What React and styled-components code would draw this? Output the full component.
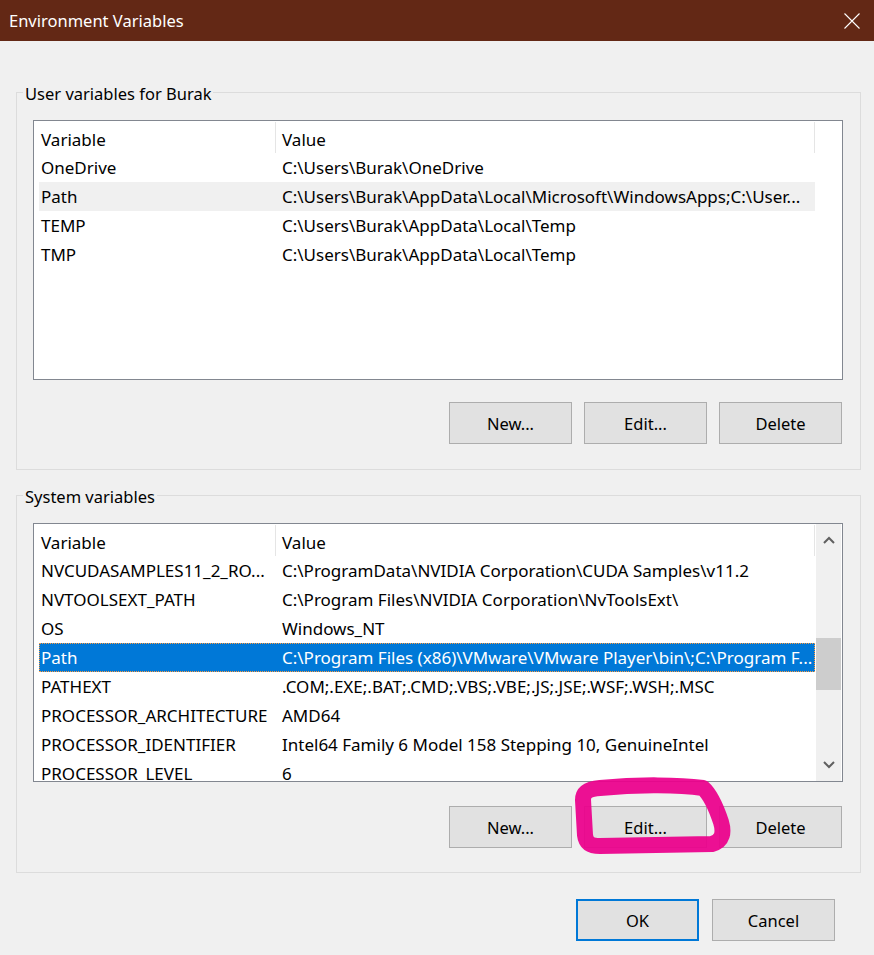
import React from "react";
import styled, { createGlobalStyle } from "styled-components";

const FONT = `"Noto Sans", "Segoe UI", "Liberation Sans", sans-serif`;

const Global = createGlobalStyle`
  html, body { margin: 0; padding: 0; background: #f0f0f0; }
  body { font-family: ${FONT}; }
  * { box-sizing: border-box; }
`;

const Window = styled.div`
  position: relative;
  width: 874px;
  height: 955px;
  background: #f0f0f0;
  display: flex;
  flex-direction: column;
  overflow: hidden;
  font-family: ${FONT};
  font-size: 16.5px;
  color: #000;
`;

const TitleBar = styled.div`
  height: 41px;
  flex: none;
  background: #632815;
  display: flex;
  align-items: center;
  justify-content: space-between;
  padding: 0 14px 0 9px;
  color: #fff;
  font-size: 16.5px;
`;

const TitleText = styled.span`
  line-height: 41px;
  padding-bottom: 1px;
`;

const Body = styled.div`
  flex: 1;
  display: flex;
  flex-direction: column;
  padding: 51px 13px 0 16px;
`;

const GroupBox = styled.div`
  position: relative;
  border: 1px solid #dcdcdc;
  margin-top: ${(p) => p.$mt || 0}px;
  padding: 27px 17px ${(p) => p.$pb}px 16px;
  display: flex;
  flex-direction: column;
`;

const Legend = styled.span`
  position: absolute;
  top: -10px;
  left: 6px;
  padding: 0 2px;
  background: #f0f0f0;
  line-height: 22px;
  white-space: nowrap;
`;

const ListBox = styled.div`
  width: 810px;
  height: ${(p) => p.$h}px;
  border: 1px solid #828790;
  background: #fff;
  display: flex;
  overflow: hidden;
  font-size: 17px;
`;

const ListContent = styled.div`
  width: 782px;
  flex: none;
  display: flex;
  flex-direction: column;
  overflow: hidden;
`;

const Header = styled.div`
  height: 32px;
  flex: none;
  display: flex;
`;

const HeaderCell = styled.div`
  width: ${(p) => p.$w}px;
  flex: none;
  margin-top: 1px;
  height: 31px;
  line-height: 31px;
  padding-top: 2px;
  padding-left: ${(p) => p.$pl}px;
  border-right: 1px solid #e5e5e5;
  white-space: nowrap;
`;

const Row = styled.div`
  height: 29px;
  flex: none;
  margin-left: 5px;
  width: 776px;
  display: flex;
  line-height: 30px;
  white-space: nowrap;
  background: ${(p) => (p.$sel ? "#0078d7" : p.$hot ? "#f0f0f0" : "transparent")};
  color: ${(p) => (p.$sel ? "#fff" : "#000")};
  outline: ${(p) => (p.$sel ? "1px dotted #ff9b3d" : "none")};
  outline-offset: -1px;
`;

const Cell = styled.div`
  width: ${(p) => p.$w}px;
  flex: ${(p) => (p.$w ? "none" : "1")};
  padding-left: ${(p) => p.$pl}px;
  overflow: hidden;
  white-space: nowrap;
`;

const ScrollBar = styled.div`
  width: 25px;
  flex: none;
  margin-right: 1px;
  background: #f0f0f0;
  display: flex;
  flex-direction: column;
`;

const ScrollArrow = styled.div`
  height: 32px;
  flex: none;
  display: flex;
  align-items: center;
  justify-content: center;
`;

const ScrollTrack = styled.div`
  flex: 1;
  display: flex;
  flex-direction: column;
`;

const Thumb = styled.div`
  margin-top: 82px;
  height: 52px;
  background: #cdcdcd;
`;

const ButtonRow = styled.div`
  width: 810px;
  display: flex;
  justify-content: flex-end;
  gap: 12px;
  padding-right: 1px;
  margin-top: ${(p) => p.$mt}px;
`;

const Button = styled.div`
  width: 123px;
  height: 42px;
  background: #e1e1e1;
  border: ${(p) => (p.$default ? "2px solid #0078d7" : "1px solid #adadad")};
  display: flex;
  align-items: center;
  justify-content: center;
  padding-top: 1px;
  white-space: nowrap;
`;

const Footer = styled.div`
  display: flex;
  justify-content: flex-end;
  gap: 13px;
  margin-top: 26px;
  padding-right: 26px;
`;

const Overlay = styled.svg`
  position: absolute;
  left: 0;
  top: 0;
  width: 874px;
  height: 955px;
  pointer-events: none;
  opacity: 0.93;
`;

const Chevron = ({ up }) => (
  <svg width="12" height="8" viewBox="0 0 12 8">
    <path
      d={up ? "M1 7 L6 2 L11 7" : "M1 1 L6 6 L11 1"}
      fill="none"
      stroke="#606060"
      strokeWidth="2"
    />
  </svg>
);

const CloseIcon = () => (
  <svg width="16" height="16" viewBox="0 0 16 16">
    <path d="M0.5 0.5 L15.5 15.5 M15.5 0.5 L0.5 15.5" stroke="#fff" strokeWidth="1.1" />
  </svg>
);

const userVars = [
  ["OneDrive", "C:\\Users\\Burak\\OneDrive"],
  ["Path", "C:\\Users\\Burak\\AppData\\Local\\Microsoft\\WindowsApps;C:\\User..."],
  ["TEMP", "C:\\Users\\Burak\\AppData\\Local\\Temp"],
  ["TMP", "C:\\Users\\Burak\\AppData\\Local\\Temp"],
];

const sysVars = [
  ["NVCUDASAMPLES11_2_RO...", "C:\\ProgramData\\NVIDIA Corporation\\CUDA Samples\\v11.2"],
  ["NVTOOLSEXT_PATH", "C:\\Program Files\\NVIDIA Corporation\\NvToolsExt\\"],
  ["OS", "Windows_NT"],
  ["Path", "C:\\Program Files (x86)\\VMware\\VMware Player\\bin\\;C:\\Program F..."],
  ["PATHEXT", ".COM;.EXE;.BAT;.CMD;.VBS;.VBE;.JS;.JSE;.WSF;.WSH;.MSC"],
  ["PROCESSOR_ARCHITECTURE", "AMD64"],
  ["PROCESSOR_IDENTIFIER", "Intel64 Family 6 Model 158 Stepping 10, GenuineIntel"],
  ["PROCESSOR_LEVEL", "6"],
];

const VarList = ({ rows, height, hot, sel, scroll }) => (
  <ListBox $h={height}>
    <ListContent>
      <Header>
        <HeaderCell $w={242} $pl={7}>Variable</HeaderCell>
        <HeaderCell $w={539} $pl={6}>Value</HeaderCell>
      </Header>
      {rows.map(([k, v], i) => (
        <Row key={k + i} $hot={i === hot} $sel={i === sel}>
          <Cell $w={236} $pl={2}>{k}</Cell>
          <Cell $pl={7}>{v}</Cell>
        </Row>
      ))}
    </ListContent>
    {scroll && (
      <ScrollBar>
        <ScrollArrow><Chevron up /></ScrollArrow>
        <ScrollTrack><Thumb /></ScrollTrack>
        <ScrollArrow><Chevron /></ScrollArrow>
      </ScrollBar>
    )}
  </ListBox>
);

export default function App() {
  return (
    <>
      <Global />
      <Window>
        <TitleBar>
          <TitleText>Environment Variables</TitleText>
          <CloseIcon />
        </TitleBar>
        <Body>
          <GroupBox $pb={25}>
            <Legend>User variables for Burak</Legend>
            <VarList rows={userVars} height={260} hot={1} sel={-1} />
            <ButtonRow $mt={22}>
              <Button>New...</Button>
              <Button>Edit...</Button>
              <Button>Delete</Button>
            </ButtonRow>
          </GroupBox>
          <GroupBox $mt={25} $pb={24}>
            <Legend>System variables</Legend>
            <VarList rows={sysVars} height={259} hot={-1} sel={3} scroll />
            <ButtonRow $mt={24}>
              <Button>New...</Button>
              <Button>Edit...</Button>
              <Button>Delete</Button>
            </ButtonRow>
          </GroupBox>
          <Footer>
            <Button $default>OK</Button>
            <Button>Cancel</Button>
          </Footer>
        </Body>
        <Overlay viewBox="0 0 874 955">
          <path
            d="M 585 835 L 583 800 C 583 792, 588 789, 600 788 C 640 784, 680 785, 703 788 C 711 795, 717 810, 721 822 C 724 832, 723 841, 712 844 L 600 846 C 590 846, 586 843, 585 835 Z"
            fill="none"
            stroke="#ec008c"
            strokeWidth="16"
            strokeLinejoin="round"
            strokeLinecap="round"
          />
        </Overlay>
      </Window>
    </>
  );
}
